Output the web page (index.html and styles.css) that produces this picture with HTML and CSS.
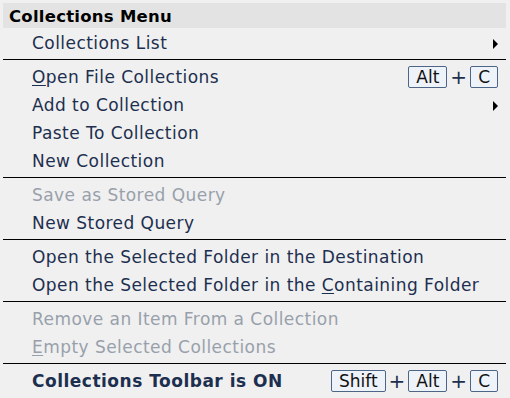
FILE: index.html
```html
<!DOCTYPE html>
<html lang="en">
<head>
     <meta charset="UTF-8">
     <title>Collections Menu</title>
     <link rel="stylesheet" href="styles.css">
</head>
<body>
     <div class="menu">
          <div class="menu-title">Collections Menu</div>
          <div class="item"><span class="label">Collections List</span><span class="arrow"></span></div>
          <div class="sep"></div>
          <div class="item"><span class="label"><u>O</u>pen File Collections</span>
               <span class="keys"><kbd>Alt</kbd><b>+</b><kbd>C</kbd></span></div>
          <div class="item"><span class="label">Add to Collection</span><span class="arrow"></span></div>
          <div class="item"><span class="label">Paste To Collection</span></div>
          <div class="item"><span class="label">New Collection</span></div>
          <div class="sep"></div>
          <div class="item off"><span class="label">Save as Stored Query</span></div>
          <div class="item"><span class="label">New Stored Query</span></div>
          <div class="sep"></div>
          <div class="item"><span class="label">Open the Selected Folder in the Destination</span></div>
          <div class="item"><span class="label">Open the Selected Folder in the <u>C</u>ontaining Folder</span></div>
          <div class="sep"></div>
          <div class="item off"><span class="label">Remove an Item From a Collection</span></div>
          <div class="item off"><span class="label"><u>E</u>mpty Selected Collections</span></div>
          <div class="sep"></div>
          <div class="item strong"><span class="label">Collections Toolbar is ON</span>
               <span class="keys"><kbd>Shift</kbd><b>+</b><kbd>Alt</kbd><b>+</b><kbd>C</kbd></span></div>
     </div>
</body>
</html>
```

FILE: styles.css
```css
body{
     margin: 0;
     background: #f0f0f0;
     font-family: "DejaVu Sans", Verdana, sans-serif;
}
.menu{
     width: 503px;
     padding: 3px 0 0 3px;
     color: #1d2f4f;
}
.menu-title{
     height: 25px;
     line-height: 28px;
     background: #e3e3e3;
     padding-left: 6px;
     font-weight: bold;
     font-size: 16.5px;
     letter-spacing: 0.25px;
     color: #000;
     margin-bottom: 1px;
}
.item{
     height: 28px;
     line-height: 31px;
     display: flex;
     align-items: center;
     padding-left: 29px;
     padding-right: 8px;
     font-size: 17px;
     letter-spacing: 0.45px;
}
.label{
     flex: 1;
     white-space: nowrap;
}
.item u{
     text-decoration-thickness: 1px;
     text-underline-offset: 2px;
}
.off{
     color: #98a0ab;
}
.strong{
     font-weight: bold;
     letter-spacing: 0.5px;
}
.arrow{
     width: 0;
     height: 0;
     border-top: 5px solid transparent;
     border-bottom: 5px solid transparent;
     border-left: 5px solid #000;
     margin-top: 1px;
}
.keys{
     display: flex;
     align-items: center;
     gap: 3px;
     font-weight: normal;
     letter-spacing: 0;
     line-height: 20px;
}
.keys kbd{
     font-family: inherit;
     font-size: 17px;
     height: 20px;
     line-height: 21px;
     padding: 0 7px;
     border: 1px solid #4d6688;
     border-radius: 2px;
     background: #eef2f9;
     color: #111;
}
.keys b{
     font-weight: normal;
     font-size: 20px;
     color: #1d2f4f;
}
.sep{
     height: 1px;
     background: #000;
     margin: 2px 0 3px;
}
```
